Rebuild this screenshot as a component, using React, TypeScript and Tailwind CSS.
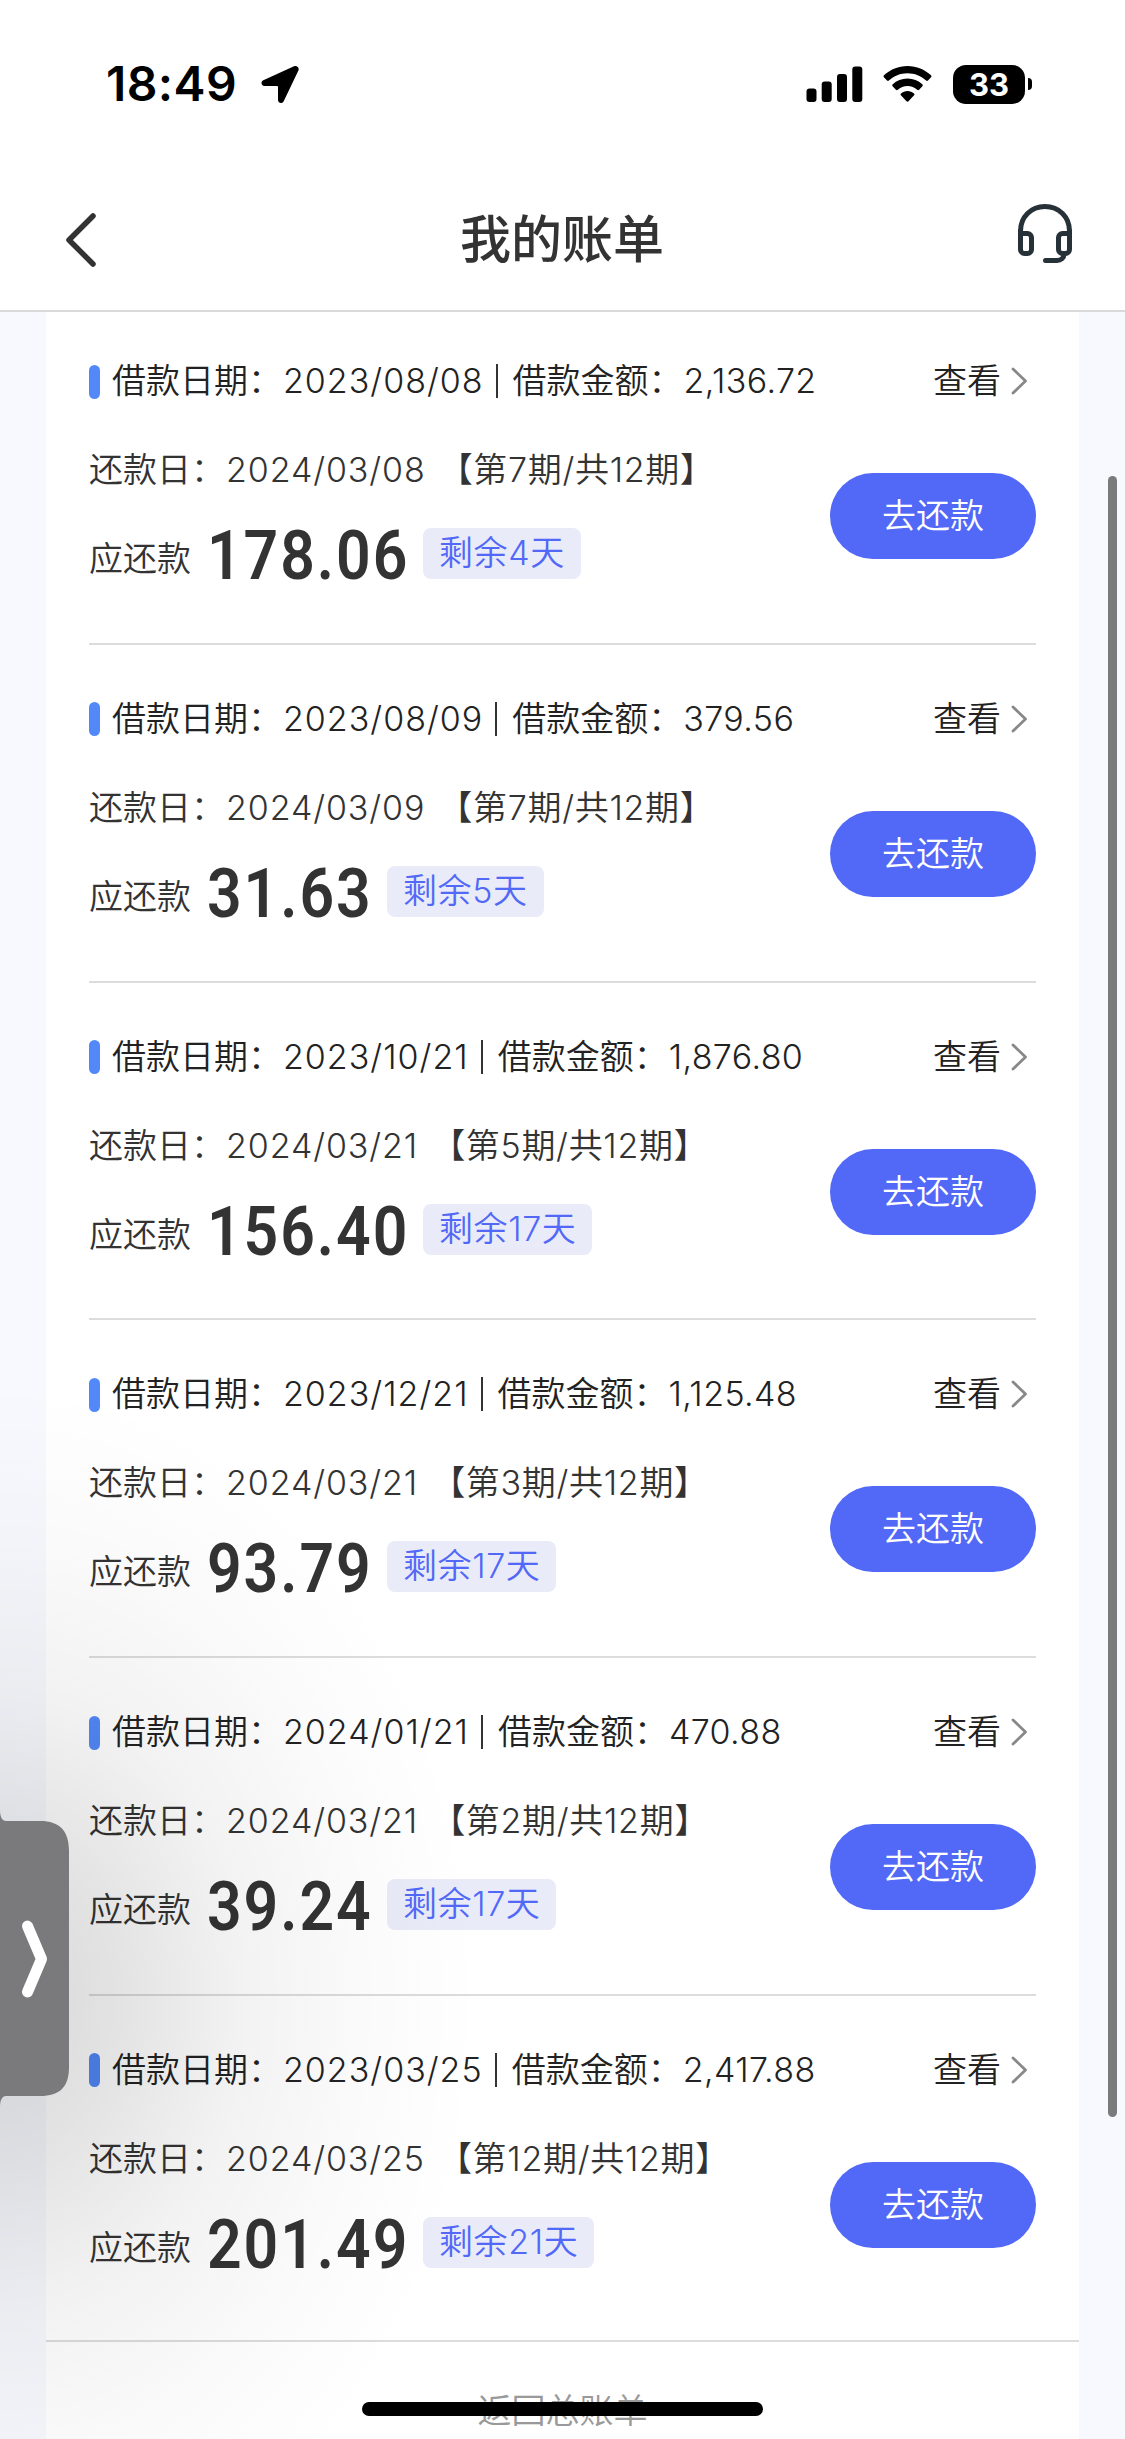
type Bill = {
  loanDate: string
  loanAmount: string
  dueDate: string
  term: string
  due: string
  daysLeft: number
}

const bills: Bill[] = [
  { loanDate: '2023/08/08', loanAmount: '2,136.72', dueDate: '2024/03/08', term: '【第7期/共12期】', due: '178.06', daysLeft: 4 },
  { loanDate: '2023/08/09', loanAmount: '379.56', dueDate: '2024/03/09', term: '【第7期/共12期】', due: '31.63', daysLeft: 5 },
  { loanDate: '2023/10/21', loanAmount: '1,876.80', dueDate: '2024/03/21', term: '【第5期/共12期】', due: '156.40', daysLeft: 17 },
  { loanDate: '2023/12/21', loanAmount: '1,125.48', dueDate: '2024/03/21', term: '【第3期/共12期】', due: '93.79', daysLeft: 17 },
  { loanDate: '2024/01/21', loanAmount: '470.88', dueDate: '2024/03/21', term: '【第2期/共12期】', due: '39.24', daysLeft: 17 },
  { loanDate: '2023/03/25', loanAmount: '2,417.88', dueDate: '2024/03/25', term: '【第12期/共12期】', due: '201.49', daysLeft: 21 },
]

const StatusBar = () => (
  <div className="flex h-[168px] items-start justify-between pt-16 pr-[93px] pl-[106px]">
    <div className="flex h-10 items-center">
      <span className="text-[48px] leading-10 font-semibold tracking-[0.4px] text-black">18:49</span>
      <svg className="ml-[24px] h-[38px] w-[38px]" viewBox="0 0 38 38" fill="#000">
        <path d="M33 1.2 2.3 15.2C-.6 16.6.2 21 3.3 21H16a1 1 0 0 1 1 1v13c0 3.3 4.4 4 5.700 1.200L37.400 5.500C38.700 2.600 35.800 0 33 1.200Z" />
      </svg>
    </div>

    <div className="flex h-10 items-center">
      {/* Signal */}
      <svg className="h-[36px] w-[57px]" viewBox="0 0 57 36" fill="#000">
        <rect x="0.500" y="22.500" width="10" height="13.500" rx="3" />
        <rect x="15.700" y="15.500" width="10" height="20.500" rx="3" />
        <rect x="31" y="8" width="10" height="28" rx="3" />
        <rect x="46.300" y="0.500" width="10" height="35.500" rx="3" />
      </svg>

      {/* Wifi */}
      <svg className="ml-[20px] h-[36px] w-[49px]" viewBox="0 0 49 36" fill="#000">
        <path d="M24.500 0C15.500 0 7.200 3.500 1 9.300c-.6.6-.6 1.300-.1 1.900L4 14.500c.6.6 1.300.6 1.900.1C10.800 10 17.300 7.300 24.500 7.300S38.200 10 43.100 14.600c.6.5 1.300.5 1.900-.1l3.100-3.300c.5-.6.5-1.300-.1-1.900C41.800 3.500 33.500 0 24.500 0Z" />
        <path d="M24.500 12.500c-5.700 0-10.900 2.200-14.800 5.800-.6.6-.6 1.300-.1 1.900l3.300 3.500c.5.6 1.300.6 1.900.1 2.600-2.400 6-3.800 9.700-3.800s7.100 1.400 9.700 3.800c.6.5 1.400.5 1.900-.1l3.300-3.500c.5-.6.5-1.300-.1-1.900-3.900-3.600-9.100-5.800-14.800-5.800Z" />
        <path d="M24.500 25c-2.500 0-4.700.9-6.500 2.400-.6.5-.6 1.300-.1 1.900l5.600 5.900c.6.6 1.400.6 2 0l5.600-5.900c.5-.6.5-1.400-.1-1.900C29.200 25.900 27 25 24.500 25Z" />
      </svg>

      {/* Battery */}
      <div className="ml-[21px] flex h-[39px] w-[72px] items-center justify-center rounded-[13px] bg-black text-[31px] leading-none font-bold text-white">
        33
      </div>
      <div className="ml-[3px] h-[12px] w-[4px] rounded-r-full bg-black" />
    </div>
  </div>
)

const Header = () => (
  <div className="flex h-[144px] items-center justify-between border-b-2 border-[#dadada] pr-[52px] pl-[65px]">
    <svg className="mt-[2px] h-[54px] w-[55px]" viewBox="0 0 55 54" fill="none" stroke="#333" strokeWidth="5.500" strokeLinecap="round" strokeLinejoin="round">
      <path d="M28 3 4 27l24 24" />
    </svg>
    <h1 className="mt-px mr-[13px] text-[51px] leading-none font-medium text-[#333]">我的账单</h1>
    <svg className="mb-[12px] h-[60px] w-[56px]" viewBox="0 0 56 60" fill="none" stroke="#263238" strokeWidth="5" strokeLinecap="round" strokeLinejoin="round">
      <path d="M3.500 29v-1C3.500 14 14 3.500 28 3.500S52.500 14 52.500 28v1" />
      <path d="M3.500 30.500h7a4 4 0 0 1 4 4v12a4 4 0 0 1-4 4h-3a4 4 0 0 1-4-4Z" />
      <path d="M52.500 30.500h-7a4 4 0 0 0-4 4v12a4 4 0 0 0 4 4h3a4 4 0 0 0 4-4Z" />
      <path d="M47 51c0 4-3 6.500-7 6.500H28.500" />
      <path d="M3.500 28v4M52.500 28v4" />
    </svg>
  </div>
)

const BillRow = ({ bill, last }: { bill: Bill; last: boolean }) => (
  <div className={last ? 'h-[344px] pt-[57px]' : 'h-[337.8px] border-b-2 border-[#dcdcdc] pt-[57px]'}>
    <div className="flex h-[36px] items-center">
      <div className="mb-px h-[34px] w-[11px] rounded-full bg-[#5288f8]" />
      <div className="ml-[12px] flex pb-[2px] text-[34px] leading-9 font-[350] text-[#222]">
        <span>借款日期：</span>
        <span className="ml-px tracking-[1px]">{bill.loanDate}</span>
        <span className="mt-px mr-[15px] ml-[12px] h-[34px] w-[2px] bg-[#333]" />
        <span>借款金额：</span>
        <span className="ml-px tracking-[0.4px]">{bill.loanAmount}</span>
      </div>
      <div className="mr-[8px] ml-auto flex items-center pb-[2px]">
        <span className="text-[34px] leading-9 font-[350] text-[#222]">查看</span>
        <svg className="ml-[10px] h-[28px] w-[17px]" viewBox="0 0 17 28" fill="none" stroke="#888" strokeWidth="2.800" strokeLinecap="round" strokeLinejoin="round">
          <path d="M2 2l12.500 12L2 26" />
        </svg>
      </div>
    </div>

    <div className="flex items-start justify-between">
      <div>
        <div className="mt-[52px] flex h-[36px] text-[34px] leading-9 font-[350] text-[#333]">
          <span>还款日：</span>
          <span className="ml-px tracking-[0.9px]">{bill.dueDate}</span>
          <span className="ml-[13px] tracking-[0.7px]">{bill.term}</span>
        </div>
        <div className="mt-[39px] flex h-[56px] items-start">
          <span className="mt-[14px] text-[34px] leading-9 font-[350] text-[#333]">应还款</span>
          <span className={bill.due.length > 5 ? 'ml-[16px] w-[216px]' : 'ml-[16px] w-[180px]'}>
            <span className="mt-px inline-block origin-left scale-x-[0.88] font-[Roboto] text-[69px] leading-[56px] font-semibold tracking-[2.2px] text-[#333]">
              {bill.due}
            </span>
          </span>
          <span className="mt-px flex h-[51px] items-center rounded-[8px] bg-[#e9ecf8] px-[16px] pb-[2px] text-[34px] font-[350] tracking-[0.6px] text-[#5268f7]">
            剩余{bill.daysLeft}天
          </span>
        </div>
      </div>
      <button className="mt-[73px] h-[86px] w-[206px] rounded-full bg-[#5268f7] pb-px text-[34px] font-[350] text-white">去还款</button>
    </div>
  </div>
)

// Collapsed floating panel handle on the left screen edge
const SideHandle = () => (
  <svg className="absolute top-[1800px] left-0 h-[318px] w-[70px]" viewBox="0 0 70 318" fill="none">
    <path d="M0 10c0 7 2 11 6 11h34c20 0 29 10 29 30v216c0 20-9 29-29 29H6c-4 0-6 4-6 11Z" fill="#7a7a7c" />
    <path d="M27.500 126 41.500 159 27.500 192" stroke="#fff" strokeWidth="11" strokeLinecap="round" strokeLinejoin="round" />
  </svg>
)

const App = () => {
  return (
    <div className="relative h-[2439px] w-[1125px] overflow-hidden bg-[#f7f9fe] font-[Inter,'Noto_Sans_CJK_SC',sans-serif]">
      <div className="relative z-10 bg-white">
        <StatusBar />
        <Header />
      </div>

      <div className="mx-[46px] -mt-[5px] bg-white">
        <div className="px-[43px]">
          {bills.map((bill, i) => (
            <BillRow key={bill.loanDate} bill={bill} last={i === bills.length - 1} />
          ))}
        </div>
        <div className="h-[102px] border-t-2 border-[#dcdcdc] pt-[51px] text-center text-[34px] leading-9 font-[350] text-[#999]">返回总账单</div>
      </div>

      {/* Handle shadow */}
      <div className="absolute top-[1320px] left-0 h-[1119px] w-[520px] bg-[radial-gradient(ellipse_480px_620px_at_0px_680px,rgba(0,0,0,0.155),rgba(0,0,0,0.11)_25%,rgba(0,0,0,0.052)_50%,rgba(0,0,0,0.018)_75%,transparent)]" />
      <SideHandle />

      {/* Scrollbar */}
      <div className="absolute top-[476px] right-[8px] h-[1641px] w-[9px] rounded-full bg-[#7b7b7e]" />

      {/* Home indicator */}
      <div className="absolute top-[2402px] left-[362px] h-[14px] w-[401px] rounded-full bg-black" />
    </div>
  )
}

export default App
